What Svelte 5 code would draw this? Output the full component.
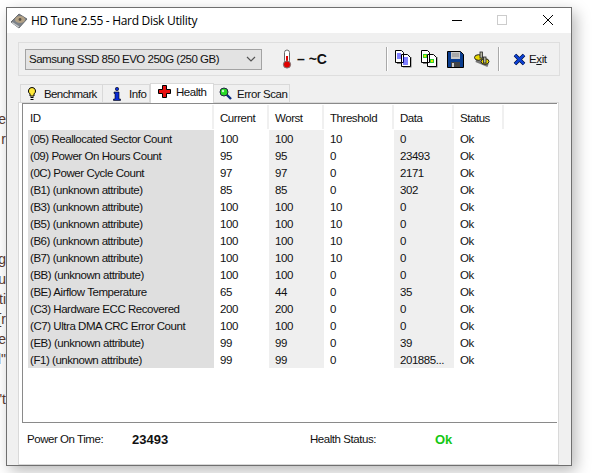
<script>
  const rows = [
    ['(05) Reallocated Sector Count', 100, 100, 10, 0],
    ['(09) Power On Hours Count', 95, 95, 0, 23493],
    ['(0C) Power Cycle Count', 97, 97, 0, 2171],
    ['(B1) (unknown attribute)', 85, 85, 0, 302],
    ['(B3) (unknown attribute)', 100, 100, 10, 0],
    ['(B5) (unknown attribute)', 100, 100, 10, 0],
    ['(B6) (unknown attribute)', 100, 100, 10, 0],
    ['(B7) (unknown attribute)', 100, 100, 10, 0],
    ['(BB) (unknown attribute)', 100, 100, 0, 0],
    ['(BE) Airflow Temperature', 65, 44, 0, 35],
    ['(C3) Hardware ECC Recovered', 200, 200, 0, 0],
    ['(C7) Ultra DMA CRC Error Count', 100, 100, 0, 0],
    ['(EB) (unknown attribute)', 99, 99, 0, 39],
    ['(F1) (unknown attribute)', 99, 99, 0, '201885...']
  ];
  const behind = [
    ['e', 110], ['r', 130], ['g', 250], ['ou', 270], ['ti', 290],
    ['[r', 310], ['e', 330], ['d"', 350], ["'t", 390]
  ];
</script>

<div class="page">
  {#each behind as [t, y]}
    <span class="frag" style="top:{y}px">{t}</span>
  {/each}

  <div class="window">
    <header class="titlebar">
      <svg class="appicon" width="18" height="18" viewBox="0 0 18 18">
        <path d="M1 10 L9 2 L17 7 L9 16 Z" fill="#7d8288" stroke="#55585c" stroke-width=".8"/>
        <ellipse cx="10" cy="7.500" rx="5" ry="3.600" fill="#b3a184"/>
        <circle cx="10" cy="7.500" r="1.400" fill="#5b5347"/>
        <path d="M2 10.500 L9 15" stroke="#c8cbce" stroke-width="1.400"/>
      </svg>
      <span class="title">HD Tune 2.55 - Hard Disk Utility</span>
      <div class="caption">
        <svg width="46" height="26" viewBox="0 0 46 26"><path d="M19 12.500h10" stroke="#000"/></svg>
        <svg width="46" height="26" viewBox="0 0 46 26"><rect x="18.500" y="7.500" width="9" height="9" fill="none" stroke="#ccc"/></svg>
        <svg width="46" height="26" viewBox="0 0 46 26"><path d="M18 7l10 10M28 7l-10 10" stroke="#000"/></svg>
      </div>
    </header>

    <div class="client">
      <div class="toolbar">
        <div class="combo">
          <span>Samsung SSD 850 EVO 250G (250 GB)</span>
          <svg width="10" height="6" viewBox="0 0 10 6"><path d="M1 1l4 4 4-4" fill="none" stroke="#555" stroke-width="1.200"/></svg>
        </div>
        <svg class="thermo" width="12" height="20" viewBox="0 0 12 20">
          <rect x="3.500" y="1" width="5" height="13" rx="2.500" fill="#fff" stroke="#666"/>
          <rect x="5" y="7" width="2" height="7" fill="#e00000"/>
          <circle cx="6" cy="15.500" r="3.600" fill="#e00000" stroke="#777"/>
        </svg>
        <span class="temp">– ~C</span>
        <div class="sep first"></div>
        <svg class="tool" width="18" height="18" viewBox="0 0 18 18">
          <path d="M3 3h7v11H3z M9 7h8.500v10.500H9z" fill="#777"/>
          <path d="M1.500 .5h6l2 2v10h-8z M7.500 4.500h6l3 3v9h-9z" fill="#fff" stroke="#000"/>
          <path d="M3 4h4M3 6h4M3 8h4M9 8h5M9 10h5M9 12h5M9 14h5" stroke="#00f"/>
        </svg>
        <svg class="tool" width="18" height="18" viewBox="0 0 18 18">
          <path d="M3 3h7v11H3z M9 7h8.500v10.500H9z" fill="#777"/>
          <path d="M1.500 .5h6l2 2v10h-8z M7.500 4.500h6l3 3v9h-9z" fill="#fff" stroke="#000"/>
          <rect x="3" y="4" width="4" height="4" fill="#2fd12f"/><rect x="10" y="9" width="4" height="4" fill="#2fd12f"/>
          <rect x="4" y="5" width="2" height="2" fill="#e8e800"/><rect x="11" y="10" width="2" height="2" fill="#e8e800"/>
        </svg>
        <svg class="tool" width="17" height="17" viewBox="0 0 17 17">
          <path d="M.5.500h13l3 3v13H.5z" fill="#0a3d8f" stroke="#000"/>
          <rect x="4" y="1" width="9" height="7" fill="#c8c8c8"/><path d="M5 3h7M5 5h7" stroke="#888"/>
          <rect x="4" y="11" width="9" height="5" fill="#444"/><rect x="5" y="12" width="2" height="4" fill="#ccc"/>
        </svg>
        <svg class="tool gear" width="16" height="16" viewBox="0 0 16 16">
          <path d="M2 9.500l12 5" stroke="#777" stroke-width="3"/>
          <ellipse cx="4.500" cy="6.500" rx="4" ry="2.800" fill="#e8d800" stroke="#222"/>
          <ellipse cx="11" cy="10.500" rx="4" ry="2.800" fill="#e8d800" stroke="#222"/>
          <rect x="6" y="1" width="2.500" height="6" fill="#b5b5a0" stroke="#222" stroke-width=".8"/>
          <rect x="9.500" y="6" width="2.500" height="6" fill="#b5b5a0" stroke="#222" stroke-width=".8"/>
        </svg>
        <div class="sep"></div>
        <svg class="exit-x" width="13" height="13" viewBox="0 0 13 13">
          <path d="M2 2l9 9M11 2l-9 9" stroke="#000" stroke-width="3.600"/>
          <path d="M2 2l9 9M11 2l-9 9" stroke="#0d3fd0" stroke-width="2.600"/>
        </svg>
        <span class="exit">E<u>x</u>it</span>
      </div>

      <nav class="tabs">
        <div class="tab bench">
          <svg width="8" height="14" viewBox="0 0 8 14"><path d="M4 .5a3.500 3.500 0 0 1 2 6.400V9H2V6.900A3.500 3.500 0 0 1 4 .5z" fill="#ffe93a" stroke="#000"/><path d="M2.500 10.500h3M2.500 12.500h3" stroke="#000"/></svg>
          <span>Benchmark</span>
        </div>
        <div class="tab info">
          <svg width="8" height="14" viewBox="0 0 8 14"><circle cx="4" cy="2" r="1.700" fill="#0a2bd6" stroke="#000" stroke-width=".6"/><path d="M1 5h5v7h1.500v1.500H.5V12H2V6.500H1z" fill="#0a2bd6" stroke="#000" stroke-width=".6"/></svg>
          <span>Info</span>
        </div>
        <div class="tab active">
          <svg width="13" height="13" viewBox="0 0 13 13"><path d="M4.500.5h4v4h4v4h-4v4h-4v-4h-4v-4h4z" fill="#e81010" stroke="#000"/></svg>
          <span>Health</span>
        </div>
        <div class="tab scan">
          <svg width="13" height="13" viewBox="0 0 13 13"><path d="M7.500 7.500l4.500 4.500" stroke="#0a2a80" stroke-width="2.400"/><circle cx="5" cy="5" r="4" fill="#27d827" stroke="#224"/><circle cx="4" cy="4" r="1.200" fill="#c9f7c9"/></svg>
          <span>Error Scan</span>
        </div>
      </nav>

      <section class="panel">
        <div class="list">
          <div class="head">
            <span class="c0">ID</span><span class="c1">Current</span><span class="c2">Worst</span><span class="c3">Threshold</span><span class="c4">Data</span><span class="c5">Status</span>
          </div>
          {#each rows as r}
            <div class="row">
              <span class="c0">{r[0]}</span><span class="c1">{r[1]}</span><span class="c2">{r[2]}</span><span class="c3">{r[3]}</span><span class="c4">{r[4]}</span><span class="c5">Ok</span>
            </div>
          {/each}
        </div>
        <footer class="status">
          <span class="lbl">Power On Time:</span>
          <b class="hours">23493</b>
          <span class="hs">Health Status:</span>
          <b class="ok">Ok</b>
        </footer>
      </section>
    </div>
  </div>
</div>

<style>
  :global(body) { margin: 0; background: #fff; }
  .page {
    position: relative;
    width: 594px;
    height: 473px;
    overflow: hidden;
    background: #fff;
    font-family: "Liberation Sans", Arial, sans-serif;
    font-size: 11.5px;
    letter-spacing: -.45px;
    color: #111;
  }
  .frag {
    position: absolute;
    right: 588px;
    font-size: 14px;
    letter-spacing: 0;
    line-height: 18px;
    color: #5a3a30;
    white-space: nowrap;
  }
  .window {
    position: absolute;
    left: 6px;
    top: 7px;
    width: 566px;
    height: 459px;
    box-sizing: border-box;
    border: 1px solid #6f6f6f;
    background: #f0f0f0;
    box-shadow: 4px 5px 14px rgba(0, 0, 0, .28);
    display: flex;
    flex-direction: column;
  }
  .titlebar {
    height: 25px;
    background: #fff;
    display: flex;
    align-items: center;
    padding-left: 3px;
    flex: none;
  }
  .appicon { margin-right: 3px; flex: none; }
  .title {
    font-family: "Open Sans", "Liberation Sans", sans-serif;
    font-size: 12px;
    letter-spacing: -.3px;
    color: #000;
    flex: 1;
  }
  .caption { display: flex; }
  .caption svg { display: block; }
  .client { flex: 1; display: flex; flex-direction: column; padding: 9px 11px 0 11px; min-height: 0; }
  .toolbar {
    height: 34px;
    box-sizing: border-box;
    border: 1px solid #dedede;
    display: flex;
    align-items: center;
    padding-left: 6px;
    flex: none;
  }
  .combo {
    width: 237px;
    height: 21px;
    box-sizing: border-box;
    border: 1px solid #a3a3a3;
    background: #e3e3e3;
    display: flex;
    align-items: center;
    justify-content: space-between;
    padding: 0 5px 0 3px;
    flex: none;
    letter-spacing: -.5px;
  }
  .thermo { margin-left: 19px; flex: none; }
  .temp { margin-left: 4px; font-weight: bold; font-size: 14px; letter-spacing: 0; width: 89px; white-space: nowrap; }
  .sep { width: 1px; height: 24px; background: #a9a9a9; flex: none; box-shadow: 1px 0 #fff; }
  .first { margin-right: 7px; }
  .tool { margin-right: 8px; flex: none; }
  .tool:nth-of-type(3) { margin-right: 9px; }
  .tool:nth-of-type(4) { margin-right: 10px; }
  .gear { margin-right: 8px; }
  .exit-x { margin-left: 14px; margin-right: 3px; flex: none; }
  .exit { letter-spacing: -.4px; }
  .tabs { display: flex; align-items: flex-end; height: 26px; padding-left: 2px; flex: none; }
  .tab {
    height: 18px;
    box-sizing: border-box;
    border: 1px solid #d9d9d9;
    border-bottom: none;
    border-left: none;
    background: #f0f0f0;
    display: flex;
    align-items: center;
    white-space: nowrap;
  }
  .tab:first-child { border-left: 1px solid #d9d9d9; }
  .bench { width: 83px; padding-left: 7px; gap: 8px; }
  .bench span { letter-spacing: -.6px; }
  .info { width: 47px; padding-left: 10px; gap: 8px; }
  .active {
    width: 64px;
    height: 20px;
    background: #fff;
    border-left: 1px solid #d9d9d9;
    padding: 0 0 4px 7px;
    gap: 5px;
    margin-bottom: -1px;
    position: relative;
    z-index: 1;
  }
  .scan { width: 76px; padding-left: 5px; gap: 5px; }
  .panel {
    flex: 1;
    min-height: 0;
    background: #fff;
    border: 1px solid #d9d9d9;
    padding: 0 1px 0 3px;
    display: flex;
    flex-direction: column;
    width: 541px;
    box-sizing: border-box;
  }
  .list {
    height: 320px;
    box-sizing: border-box;
    border: 1px solid #8a8a8a;
    border-right: none;
    padding-left: 5px;
    flex: none;
  }
  .head, .row { display: flex; }
  .head { height: 26px; align-items: center; }
  .head span {
    box-sizing: border-box;
    height: 24px;
    line-height: 26px;
    border-right: 2px solid #f0f0f0;
    background: #fff;
  }
  .row { height: 17px; line-height: 18px; }
  .row span { box-sizing: border-box; white-space: nowrap; height: 17px; }
  .c0 { width: 186px; padding-left: 2px; }
  .c1 { width: 55px; padding-left: 6px; }
  .c2 { width: 55px; padding-left: 6px; }
  .c3 { width: 70px; padding-left: 6px; }
  .c4 { width: 60px; padding-left: 6px; }
  .c5 { width: 50px; padding-left: 6px; }
  .row .c0 { background: #dfdfdf; }
  .row .c2, .row .c4 { background: #efefef; }
  .status { display: flex; align-items: center; height: 32px; padding-left: 5px; white-space: nowrap; }
  .lbl { width: 105px; flex: none; }
  .hours { width: 178px; font-size: 13px; letter-spacing: 0; flex: none; }
  .hs { width: 125px; flex: none; }
  .ok { color: #14c814; font-size: 13px; letter-spacing: 0; }
</style>
